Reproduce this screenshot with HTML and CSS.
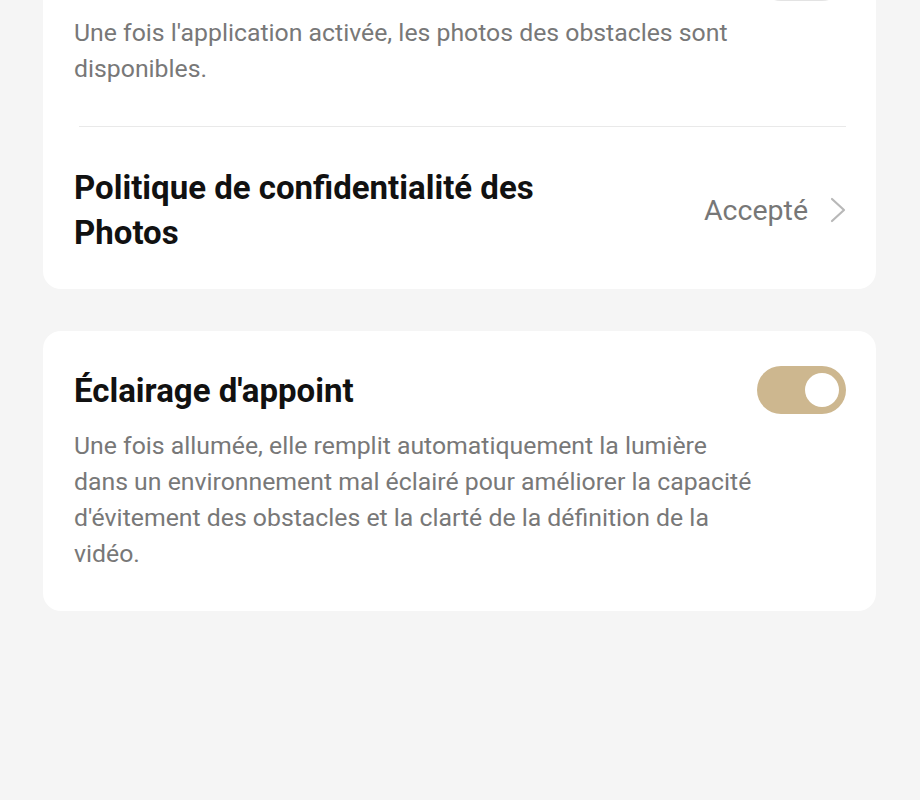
FILE: index.html
```html
<!DOCTYPE html>
<html lang="fr">
<head>
<meta charset="utf-8">
<title>Paramètres</title>
<link rel="stylesheet" href="styles.css">
</head>
<body>
<main class="page">
  <section class="card card-first">
    <div class="row-head">
      <div class="title"></div>
      <span class="toggle toggle-off"><span class="thumb"></span></span>
    </div>
    <p class="desc">Une fois l'application activée, les photos des obstacles sont disponibles.</p>
    <div class="divider"></div>
    <div class="row-link">
      <div class="title title-wrap">Politique de confidentialité des Photos</div>
      <div class="link-value">
        <span class="value">Accepté</span>
        <svg class="chevron" width="16" height="26" viewBox="0 0 16 26"><path d="M2 2 L14 13 L2 24" fill="none" stroke="#b8b8b8" stroke-width="2.2" stroke-linecap="round" stroke-linejoin="round"/></svg>
      </div>
    </div>
  </section>

  <section class="card">
    <div class="row-head">
      <div class="title">Éclairage d'appoint</div>
      <span class="toggle toggle-on"><span class="thumb"></span></span>
    </div>
    <p class="desc">Une fois allumée, elle remplit automatiquement la lumière dans un environnement mal éclairé pour améliorer la capacité d'évitement des obstacles et la clarté de la définition de la vidéo.</p>
  </section>
</main>
</body>
</html>
```

FILE: styles.css
```css
* { box-sizing: border-box; }
html, body {
  margin: 0;
  padding: 0;
  background: #f5f5f5;
  font-family: Roboto, "Noto Sans", "Liberation Sans", sans-serif;
}
.page {
  display: flex;
  flex-direction: column;
  gap: 42px;
  padding: 0 44px 0 43px;
}
.card {
  background: #ffffff;
  border-radius: 18px;
  padding: 35px 30px 39px 31px;
}
.card-first {
  margin-top: -82px;
  padding-bottom: 0;
}
.row-head {
  display: flex;
  align-items: center;
  justify-content: space-between;
  min-height: 48px;
}
.title {
  font-size: 33px;
  font-weight: 700;
  line-height: 45px;
  color: #111111;
}
.title-wrap {
  max-width: 540px;
}
.toggle {
  position: relative;
  display: inline-block;
  width: 89px;
  height: 48px;
  border-radius: 24px;
  flex: none;
}
.toggle-on { background: #cdb78f; }
.toggle-off { background: #e3e3e3; }
.thumb {
  position: absolute;
  top: 7px;
  width: 34px;
  height: 34px;
  border-radius: 50%;
  background: #ffffff;
}
.toggle-on .thumb { right: 7px; }
.toggle-off .thumb { left: 7px; }
.desc {
  margin: 14px 0 0;
  font-size: 24.8px;
  line-height: 36px;
  color: #787878;
  max-width: 686px;
}
.divider {
  height: 1px;
  background: #e9e9e9;
  margin: 39px 0 0 5px;
}
.row-link {
  display: flex;
  align-items: center;
  justify-content: space-between;
  padding: 38px 0 34px;
}
.link-value {
  display: flex;
  align-items: center;
  gap: 22px;
}
.value {
  font-size: 28.5px;
  color: #777777;
}
.chevron { display: block; }
```
